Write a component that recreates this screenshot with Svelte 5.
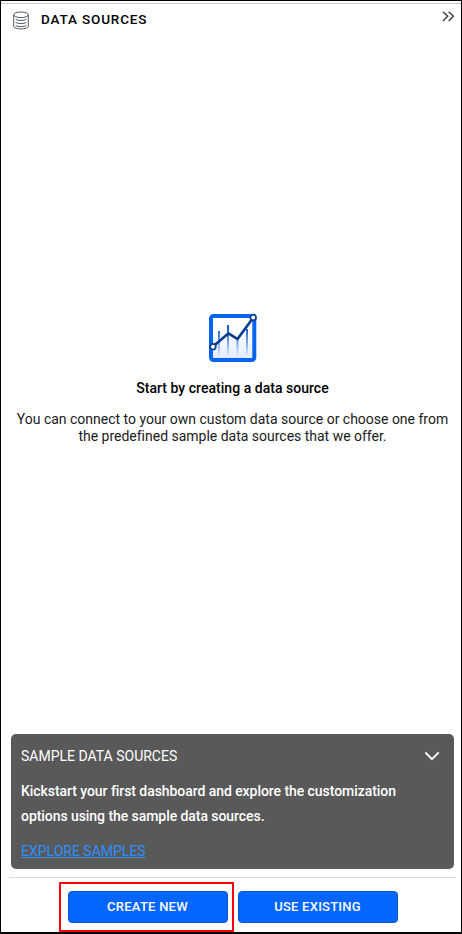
<script>
  const buttons = [
    { label: 'CREATE NEW', marked: true },
    { label: 'USE EXISTING', marked: false },
  ];
</script>

<main class="panel">
  <header>
    <svg class="database" width="18" height="20" viewBox="0 0 18 20" fill="none" stroke="#555c63">
      <ellipse cx="9" cy="3.8" rx="7.3" ry="2.8" />
      <path d="M1.7 3.8v11.4c0 3.6 14.6 3.6 14.6 0V3.8M3.7 8.3c2.3 1.6 8.3 1.6 10.6 0M3.7 11.4c2.3 1.6 8.3 1.6 10.6 0M3.7 14.5c2.3 1.6 8.3 1.6 10.6 0" />
    </svg>
    <h1>DATA SOURCES</h1>
    <svg class="collapse" width="13" height="11" viewBox="0 0 13 11" fill="none" stroke="#3f3d4b" stroke-width="1.45">
      <path d="M1 .7l4.7 4.6L1 9.9M6.7 .7l4.7 4.6-4.7 4.6" />
    </svg>
  </header>

  <section class="empty">
    <svg width="50" height="50" viewBox="0 0 50 50" fill="none">
      <defs>
        <linearGradient id="panelFill" x1="0" y1="0" x2="0" y2="1">
          <stop offset="0.2" stop-color="#fff" />
          <stop offset="1" stop-color="#e3edff" />
        </linearGradient>
        <linearGradient id="barFill" x1="0" y1="16" x2="0" y2="43" gradientUnits="userSpaceOnUse">
          <stop offset="0" stop-color="#185bd2" />
          <stop offset="1" stop-color="#d9e6ff" />
        </linearGradient>
      </defs>
      <rect x="3" y="4" width="43.3" height="44" rx="2.5" fill="url(#panelFill)" stroke="#0565f2" stroke-width="4" />
      <g fill="url(#barFill)">
        <rect x="10" y="19" width="2" height="24" />
        <rect x="19" y="13" width="2" height="30" />
        <rect x="28.5" y="28" width="2" height="15" />
        <rect x="38" y="17" width="2" height="26" />
      </g>
      <path d="M5 34.5L20.5 21.3L29.5 27L45 6" stroke="#083c8c" stroke-width="2.6" />
      <circle cx="5" cy="34.7" r="2.8" fill="#fff" stroke="#083c8c" stroke-width="1.7" />
      <circle cx="45.2" cy="5.5" r="2.8" fill="#fff" stroke="#083c8c" stroke-width="1.7" />
    </svg>
    <h2>Start by creating a data source</h2>
    <p>You can connect to your own custom data source or choose one from<br />the predefined sample data sources that we offer.</p>
  </section>

  <section class="samples">
    <div class="samples-head">
      <span>SAMPLE DATA SOURCES</span>
      <svg width="16" height="10" viewBox="0 0 16 10" fill="none" stroke="#fff" stroke-width="1.9">
        <path d="M.3 1.4L7 8.1l6.7-6.7" />
      </svg>
    </div>
    <p>Kickstart your first dashboard and explore the customization<br />options using the sample data sources.</p>
    <a href="#samples">EXPLORE SAMPLES</a>
  </section>

  <footer>
    {#each buttons as button}
      <div class="slot" class:marked={button.marked}>
        <button>{button.label}</button>
      </div>
    {/each}
  </footer>
</main>

<style>
  * { box-sizing: border-box; }
  .panel {
    width: 462px;
    height: 934px;
    border: 1px solid #000;
    border-bottom-width: 2px;
    background: #fff;
    display: flex;
    flex-direction: column;
    font-family: Roboto, "Liberation Sans", sans-serif;
    color: #000;
  }
  h1, h2, p { margin: 0; }
  header {
    margin-top: 2px;
    border-top: 1px solid #c9c4c9;
    height: 36px;
    padding: 7px 6px 0 11px;
    display: flex;
    align-items: flex-start;
  }
  .database { flex: none; }
  h1 {
    margin-left: 11px;
    font-size: 13.5px;
    line-height: 16px;
    font-weight: 500;
    letter-spacing: 0.85px;
    white-space: nowrap;
  }
  .collapse { margin-left: auto; }
  .empty {
    flex: 1;
    display: flex;
    flex-direction: column;
    align-items: center;
    padding-top: 273px;
    padding-left: 3px;
    text-align: center;
  }
  h2 {
    margin-top: 17px;
    font-size: 14px;
    line-height: 18px;
    font-weight: 500;
    letter-spacing: 0.03px;
    white-space: nowrap;
  }
  .empty p {
    margin-top: 14px;
    font-size: 14px;
    line-height: 17px;
    letter-spacing: -0.01px;
    white-space: nowrap;
    color: #1a1a1a;
  }
  .samples {
    height: 135px;
    margin: 0 7px 0 10px;
    padding: 13px 13px 0 10px;
    border-radius: 5px;
    background: #595959;
    color: #fff;
    font-size: 14px;
  }
  .samples-head {
    display: flex;
    justify-content: space-between;
    align-items: center;
    height: 18px;
    white-space: nowrap;
  }
  .samples p {
    margin-top: 14px;
    line-height: 25px;
    font-weight: 500;
    letter-spacing: -0.06px;
    white-space: nowrap;
  }
  .samples a {
    display: inline-block;
    margin-top: 13px;
    line-height: 18px;
    color: #2b90ff;
  }
  footer {
    margin: 8px 5px 0 8px;
    padding: 4px 0 0 50px;
    border-top: 1px solid #d9d9d9;
    height: 55px;
    display: flex;
  }
  .slot {
    width: 175px;
    height: 50px;
    padding: 7px;
    border: 2px solid transparent;
  }
  .slot:not(.marked) { margin-left: -5px; }
  .slot.marked { border-color: #fb0007; }
  button {
    display: block;
    width: 160px;
    height: 32px;
    padding: 0 1px 0 0;
    border: 1px solid #0756d4;
    border-radius: 4px;
    background: #0565ff;
    color: #fff;
    font: 500 13px/28px Roboto, "Liberation Sans", sans-serif;
    letter-spacing: 0.25px;
  }
</style>
